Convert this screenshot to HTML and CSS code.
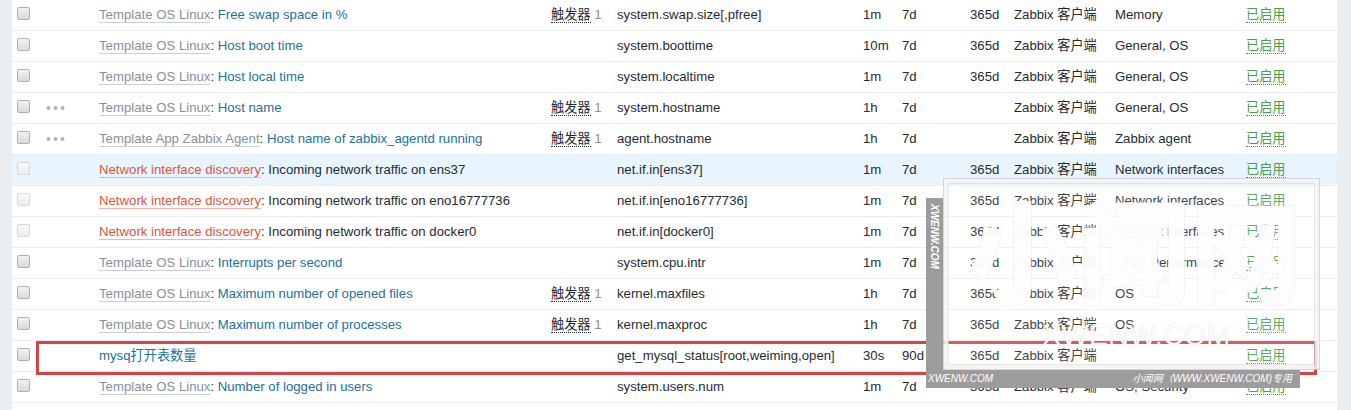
FILE: index.html
```html
<!DOCTYPE html>
<html lang="zh">
<head>
<meta charset="utf-8">
<title>Items</title>
<link rel="stylesheet" href="styles.css">
</head>
<body>
<div class="wrap">
  <table class="items">
    <colgroup>
      <col class="w-cb"><col class="w-wiz"><col class="w-name"><col class="w-trig"><col class="w-key"><col class="w-int"><col class="w-hist"><col class="w-trend"><col class="w-type"><col class="w-app"><col class="w-status">
    </colgroup>
    <tbody>
      <tr>
        <td><span class="cb"></span></td><td></td>
        <td><span class="tpl">Template OS Linux</span>: <span class="lnk">Free swap space in %</span></td>
        <td><span class="act">触发器</span> <span class="gr">1</span></td>
        <td>system.swap.size[,pfree]</td><td>1m</td><td>7d</td><td>365d</td><td>Zabbix 客户端</td><td>Memory</td><td><span class="on">已启用</span></td>
      </tr>
      <tr>
        <td><span class="cb"></span></td><td></td>
        <td><span class="tpl">Template OS Linux</span>: <span class="lnk">Host boot time</span></td>
        <td></td>
        <td>system.boottime</td><td>10m</td><td>7d</td><td>365d</td><td>Zabbix 客户端</td><td>General, OS</td><td><span class="on">已启用</span></td>
      </tr>
      <tr>
        <td><span class="cb"></span></td><td></td>
        <td><span class="tpl">Template OS Linux</span>: <span class="lnk">Host local time</span></td>
        <td></td>
        <td>system.localtime</td><td>1m</td><td>7d</td><td>365d</td><td>Zabbix 客户端</td><td>General, OS</td><td><span class="on">已启用</span></td>
      </tr>
      <tr>
        <td><span class="cb"></span></td>
        <td><svg class="dots" width="20" height="6" viewBox="0 0 20 6"><circle cx="2.5" cy="3" r="2"/><circle cx="9.5" cy="3" r="2"/><circle cx="16.5" cy="3" r="2"/></svg></td>
        <td><span class="tpl">Template OS Linux</span>: <span class="lnk">Host name</span></td>
        <td><span class="act">触发器</span> <span class="gr">1</span></td>
        <td>system.hostname</td><td>1h</td><td>7d</td><td></td><td>Zabbix 客户端</td><td>General, OS</td><td><span class="on">已启用</span></td>
      </tr>
      <tr>
        <td><span class="cb"></span></td>
        <td><svg class="dots" width="20" height="6" viewBox="0 0 20 6"><circle cx="2.5" cy="3" r="2"/><circle cx="9.5" cy="3" r="2"/><circle cx="16.5" cy="3" r="2"/></svg></td>
        <td><span class="tpl">Template App Zabbix Agent</span>: <span class="lnk">Host name of zabbix_agentd running</span></td>
        <td><span class="act">触发器</span> <span class="gr">1</span></td>
        <td>agent.hostname</td><td>1h</td><td>7d</td><td></td><td>Zabbix 客户端</td><td>Zabbix agent</td><td><span class="on">已启用</span></td>
      </tr>
      <tr class="hover">
        <td><span class="cb off"></span></td><td></td>
        <td><span class="disc">Network interface discovery</span>: Incoming network traffic on ens37</td>
        <td></td>
        <td>net.if.in[ens37]</td><td>1m</td><td>7d</td><td>365d</td><td>Zabbix 客户端</td><td>Network interfaces</td><td><span class="on">已启用</span></td>
      </tr>
      <tr>
        <td><span class="cb off"></span></td><td></td>
        <td><span class="disc">Network interface discovery</span>: Incoming network traffic on eno16777736</td>
        <td></td>
        <td>net.if.in[eno16777736]</td><td>1m</td><td>7d</td><td>365d</td><td>Zabbix 客户端</td><td>Network interfaces</td><td><span class="on">已启用</span></td>
      </tr>
      <tr>
        <td><span class="cb off"></span></td><td></td>
        <td><span class="disc">Network interface discovery</span>: Incoming network traffic on docker0</td>
        <td></td>
        <td>net.if.in[docker0]</td><td>1m</td><td>7d</td><td>365d</td><td>Zabbix 客户端</td><td>Network interfaces</td><td><span class="on">已启用</span></td>
      </tr>
      <tr>
        <td><span class="cb"></span></td><td></td>
        <td><span class="tpl">Template OS Linux</span>: <span class="lnk">Interrupts per second</span></td>
        <td></td>
        <td>system.cpu.intr</td><td>1m</td><td>7d</td><td>365d</td><td>Zabbix 客户端</td><td>CPU, Performance</td><td><span class="on">已启用</span></td>
      </tr>
      <tr>
        <td><span class="cb"></span></td><td></td>
        <td><span class="tpl">Template OS Linux</span>: <span class="lnk">Maximum number of opened files</span></td>
        <td><span class="act">触发器</span> <span class="gr">1</span></td>
        <td>kernel.maxfiles</td><td>1h</td><td>7d</td><td>365d</td><td>Zabbix 客户端</td><td>OS</td><td><span class="on">已启用</span></td>
      </tr>
      <tr>
        <td><span class="cb"></span></td><td></td>
        <td><span class="tpl">Template OS Linux</span>: <span class="lnk">Maximum number of processes</span></td>
        <td><span class="act">触发器</span> <span class="gr">1</span></td>
        <td>kernel.maxproc</td><td>1h</td><td>7d</td><td>365d</td><td>Zabbix 客户端</td><td>OS</td><td><span class="on">已启用</span></td>
      </tr>
      <tr>
        <td><span class="cb"></span></td><td></td>
        <td><span class="lnk">mysq打开表数量</span></td>
        <td></td>
        <td>get_mysql_status[root,weiming,open]</td><td>30s</td><td>90d</td><td>365d</td><td>Zabbix 客户端</td><td></td><td><span class="on">已启用</span></td>
      </tr>
      <tr>
        <td><span class="cb"></span></td><td></td>
        <td><span class="tpl">Template OS Linux</span>: <span class="lnk">Number of logged in users</span></td>
        <td></td>
        <td>system.users.num</td><td>1m</td><td>7d</td><td>365d</td><td>Zabbix 客户端</td><td>OS, Security</td><td><span class="on">已启用</span></td>
      </tr>
    </tbody>
  </table>

  <div class="redbox"></div>

  <div class="wm-box">
    <div class="wm-big">小闻网</div>
    <div class="wm-url">XWENW.COM</div>
  </div>
  <div class="wm-side">XWENW.COM</div>
  <div class="wm-bottom">
    <span>XWENW.COM</span>
    <span>小闻网（WWW.XWENW.COM)专用</span>
  </div>
</div>
</body>
</html>
```

FILE: styles.css
```css
html, body {
  margin: 0;
  padding: 0;
  background: #ebeef0;
  overflow: hidden;
}

.wrap {
  position: relative;
  height: 410px;
  padding: 0 14px 0 12px;
  font-family: "Liberation Sans", Arial, "Noto Sans CJK SC", sans-serif;
  font-size: 13.2px;
  color: #1f2c33;
  background: linear-gradient(#fff, #fff) 12px 0 / 1325px 100% no-repeat, #ebeef0;
}

.items {
  width: 1325px;
  table-layout: fixed;
  border-collapse: collapse;
  background: #fff;
}

.w-cb { width: 29px; }
.w-wiz { width: 53px; }
.w-name { width: 452px; }
.w-trig { width: 66px; }
.w-key { width: 246px; }
.w-int { width: 39px; }
.w-hist { width: 68px; }
.w-trend { width: 44px; }
.w-type { width: 101px; }
.w-app { width: 131px; }
.w-status { width: 96px; }

.items td {
  height: 30px;
  padding: 0 5px;
  border-bottom: 1px solid #ebeef0;
  vertical-align: middle;
  white-space: nowrap;
  line-height: 16px;
}

.items tr.hover td {
  background: #e8f5ff;
}

.cb {
  display: block;
  width: 11px;
  height: 11px;
  border: 1px solid #a9b4ba;
  border-radius: 2px;
  background: linear-gradient(#f2f2f2, #d9d9d9);
  margin-top: -3px;
}

.cb.off {
  border-color: #d3d9dc;
  background: linear-gradient(#fafafa, #ececec);
}

.dots {
  display: block;
  fill: #acb6bc;
  margin-top: -1px;
}

.tpl {
  color: #86929a;
  border-bottom: 1px solid #c8d0d4;
}

.lnk {
  color: #22709f;
}

.disc {
  color: #e0533c;
  border-bottom: 1px solid #f0b4a8;
}

.act {
  color: #1f2c33;
  border-bottom: 1px dotted #1f2c33;
}

.gr {
  color: #86929a;
}

.on {
  color: #4a9e4e;
  border-bottom: 1px dotted #4a9e4e;
}

.redbox {
  position: absolute;
  left: 36px;
  top: 341px;
  width: 1275px;
  height: 28px;
  border: 3px solid #d8434a;
}

.wm-box {
  position: absolute;
  left: 943px;
  top: 178px;
  width: 375px;
  height: 190px;
  border: 1px solid rgba(205, 205, 205, 0.8);
  background: rgba(255, 255, 255, 0.12);
  box-shadow: inset 0 0 0 4px rgba(255, 255, 255, 0.6), inset 0 0 0 5px rgba(215, 215, 215, 0.6);
  overflow: hidden;
}

.wm-big {
  position: absolute;
  left: 22px;
  top: 8px;
  font-family: "Noto Sans CJK SC", sans-serif;
  font-weight: 900;
  font-size: 112px;
  line-height: 120px;
  color: rgba(255, 255, 255, 0.95);
  text-shadow: 0 0 1px rgba(120, 120, 120, 0.35);
}

.wm-url {
  position: absolute;
  left: 98px;
  top: 140px;
  font-family: "Liberation Sans", Arial, sans-serif;
  font-size: 29px;
  line-height: 32px;
  color: rgba(255, 255, 255, 0.95);
  text-shadow: 0 0 1px rgba(120, 120, 120, 0.35);
}

.wm-side {
  position: absolute;
  left: 926px;
  top: 198px;
  width: 17px;
  height: 190px;
  background: #9c9c9c;
  color: #fff;
  writing-mode: vertical-rl;
  font-size: 10px;
  font-style: italic;
  font-weight: bold;
  line-height: 17px;
  padding-top: 6px;
  box-sizing: border-box;
}

.wm-bottom {
  position: absolute;
  left: 943px;
  top: 370px;
  width: 357px;
  height: 18px;
  background: #9c9c9c;
  color: #fff;
  font-size: 10px;
  font-style: italic;
  line-height: 18px;
  display: flex;
  justify-content: space-between;
  padding: 0 8px 0 0;
  box-sizing: border-box;
}

.wm-bottom span:first-child {
  margin-left: -15px;
}
```
